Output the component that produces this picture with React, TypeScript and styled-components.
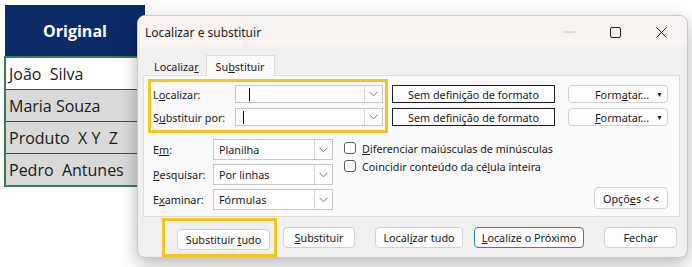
import styled, { createGlobalStyle } from "styled-components";
import { ReactNode } from "react";

const GlobalStyle = createGlobalStyle`
    html, body {
        margin: 0;
        padding: 0;
        background: #ffffff;
    }
    body {
        width: 692px;
        height: 267px;
        overflow: hidden;
        font-family: "Noto Sans", "Open Sans", sans-serif;
    }
`;

const Page = styled.div`
    position: relative;
    width: 692px;
    height: 267px;
    padding: 5px 0 0 5px;
    box-sizing: border-box;
`;

// ---------- spreadsheet behind the dialog ----------

const Sheet = styled.div`
    width: 140px;
    display: flex;
    flex-direction: column;
`;

const HeaderCell = styled.div`
    height: 51px;
    background: #0b2a66;
    color: #ffffff;
    font-family: "Open Sans", "Noto Sans", sans-serif;
    font-weight: 700;
    font-size: 16px;
    display: flex;
    align-items: center;
    justify-content: center;
`;

const Rows = styled.div`
    border: 2px solid #3d7a57;
    margin-left: -1px;
    width: 136px;
`;

const Row = styled.div<{ $shaded?: boolean }>`
    height: 31px;
    display: flex;
    align-items: center;
    padding-left: 3px;
    background: ${(p) => (p.$shaded ? "#d9d9d9" : "#ffffff")};
    border-top: ${(p) => (p.$shaded ? "1px solid #4a4a4a" : "none")};
    font-family: "Open Sans", "Noto Sans", sans-serif;
    font-size: 16px;
    color: #1a1a1a;
    white-space: pre;
`;

// ---------- dialog window ----------

const Dialog = styled.div`
    position: absolute;
    left: 137px;
    top: 15px;
    width: 551px;
    height: 243px;
    border-radius: 8px;
    border: 1px solid #c9c9c9;
    box-sizing: border-box;
    background: #f0f0f0;
    box-shadow: 0 6px 18px rgba(0, 0, 0, 0.28);
    overflow: hidden;
    font-size: 10.8px;
    color: #1b1b1b;
    display: flex;
    flex-direction: column;
`;

const TitleBar = styled.div`
    height: 30px;
    flex-shrink: 0;
    background: #f9f3f1;
    display: flex;
    align-items: center;
    padding: 1px 3px 0 7px;
`;

const Title = styled.div`
    flex: 1;
    font-size: 12px;
    color: #222;
`;

const WinButton = styled.div`
    width: 46px;
    height: 30px;
    display: flex;
    align-items: center;
    justify-content: center;
`;

const Tabs = styled.div`
    display: flex;
    align-items: flex-end;
    height: 21px;
    margin-top: 7px;
    padding-left: 9px;
    position: relative;
    z-index: 1;
`;

const Tab = styled.div<{ $active?: boolean }>`
    height: ${(p) => (p.$active ? "21px" : "19px")};
    padding: 0 ${(p) => (p.$active ? "9px" : "6px")};
    display: flex;
    align-items: center;
    box-sizing: border-box;
    background: ${(p) => (p.$active ? "#fafafa" : "transparent")};
    border: ${(p) => (p.$active ? "1px solid #dcdcdc" : "1px solid transparent")};
    border-bottom: none;
    margin-bottom: ${(p) => (p.$active ? "-1px" : "0")};
`;

const Panel = styled.div`
    margin: 0 7px 0 5px;
    height: 142px;
    box-sizing: border-box;
    background: #fafafa;
    border: 1px solid #dcdcdc;
    padding: 3px 0 0 4px;
    display: flex;
    flex-direction: column;
`;

const TopSection = styled.div`
    display: flex;
    align-items: flex-start;
`;

const Highlight = styled.div`
    border: 3px solid #f5c524;
    box-sizing: border-box;
`;

const FindBox = styled(Highlight)`
    width: 240px;
    height: 54px;
    padding: 3px 0 0 2px;
    display: flex;
    flex-direction: column;
    gap: 5px;
`;

const FieldRow = styled.div`
    display: flex;
    align-items: center;
    height: 18px;
`;

const Label = styled.div<{ $w: number }>`
    width: ${(p) => p.$w}px;
    flex-shrink: 0;
    white-space: nowrap;
`;

const Combo = styled.div<{ $w: number; $h: number }>`
    width: ${(p) => p.$w}px;
    height: ${(p) => p.$h}px;
    box-sizing: border-box;
    background: #ffffff;
    border: 1px solid #c8c8c8;
    display: flex;
    align-items: center;
`;

const ComboText = styled.div`
    flex: 1;
    padding-left: 5px;
    display: flex;
    align-items: center;
    white-space: nowrap;
`;

const Caret = styled.span<{ $indent: number }>`
    display: inline-block;
    width: 1px;
    height: 13px;
    background: #111;
    margin-left: ${(p) => p.$indent}px;
`;

const Arrow = styled.div`
    width: 17px;
    align-self: stretch;
    border-left: 1px solid #d6d6d6;
    display: flex;
    align-items: center;
    justify-content: center;
`;

const Column = styled.div<{ $ml: number; $mt: number }>`
    display: flex;
    flex-direction: column;
    gap: 5px;
    margin-left: ${(p) => p.$ml}px;
    margin-top: ${(p) => p.$mt}px;
`;

const FormatBox = styled.div`
    width: 163px;
    height: 18px;
    box-sizing: border-box;
    background: #ffffff;
    border: 1px solid #1f1f1f;
    display: flex;
    align-items: center;
    justify-content: center;
`;

const Button = styled.div<{ $w: number; $h?: number; $primary?: boolean }>`
    width: ${(p) => p.$w}px;
    height: ${(p) => p.$h ?? 21}px;
    box-sizing: border-box;
    background: #fdfdfd;
    border: 1px solid ${(p) => (p.$primary ? "#2f7fd0" : "#d2d2d2")};
    border-radius: 4px;
    display: flex;
    align-items: center;
    justify-content: center;
    white-space: pre;
    flex-shrink: 0;
`;

const DropButton = styled(Button)`
    justify-content: flex-start;
    padding-left: 26px;
`;

const DropMark = styled.span`
    margin-left: auto;
    margin-right: 4px;
    font-size: 7px;
`;

const LowerSection = styled.div`
    display: flex;
    margin-top: 6px;
    padding-left: 5px;
    flex: 1;
`;

const OptionGrid = styled.div`
    display: grid;
    grid-template-columns: 60px 120px;
    grid-auto-rows: 21px;
    row-gap: 4px;
    align-items: center;
`;

const Checks = styled.div`
    display: flex;
    flex-direction: column;
    gap: 4px;
    margin-left: 11px;
    padding-top: 2px;
`;

const CheckRow = styled.div`
    display: flex;
    align-items: center;
    gap: 6px;
    height: 14px;
`;

const Box = styled.span`
    width: 12px;
    height: 12px;
    box-sizing: border-box;
    border: 1px solid #5a5a5a;
    border-radius: 3px;
    background: #fdfdfd;
`;

const OptionsSlot = styled.div`
    margin-left: auto;
    margin-right: 11px;
    align-self: flex-start;
    margin-top: 48px;
`;

const BottomBar = styled.div`
    display: flex;
    align-items: center;
    padding-left: 24px;
    margin-top: 1px;
`;

const ButtonBox = styled(Highlight)`
    width: 115px;
    height: 39px;
    padding: 8px 0 0 12px;
`;

const Gap = styled.div<{ $w: number }>`
    width: ${(p) => p.$w}px;
    flex-shrink: 0;
`;

const Chevron = () => (
    <svg width="9" height="6" viewBox="0 0 9 6">
        <path d="M0.5 0.8 L4.5 4.8 L8.5 0.8" fill="none" stroke="#7a7a7a" strokeWidth="1" />
    </svg>
);

const ComboField = ({ w, h, children }: { w: number; h: number; children?: ReactNode }) => (
    <Combo $w={w} $h={h}>
        <ComboText>{children}</ComboText>
        <Arrow>
            <Chevron />
        </Arrow>
    </Combo>
);

export default function App() {
    return (
        <>
            <GlobalStyle />
            <Page>
                <Sheet>
                    <HeaderCell>Original</HeaderCell>
                    <Rows>
                        <Row>João  Silva</Row>
                        <Row $shaded>Maria Souza</Row>
                        <Row $shaded>Produto  X Y  Z</Row>
                        <Row $shaded>Pedro  Antunes</Row>
                    </Rows>
                </Sheet>

                <Dialog>
                    <TitleBar>
                        <Title>Localizar e substituir</Title>
                        <WinButton>
                            <svg width="12" height="2" viewBox="0 0 12 2">
                                <path d="M0 1 H12" stroke="#c4c4c4" strokeWidth="1" />
                            </svg>
                        </WinButton>
                        <WinButton>
                            <svg width="11" height="11" viewBox="0 0 11 11">
                                <rect x="0.5" y="0.5" width="10" height="10" rx="1.5" fill="none" stroke="#222" strokeWidth="1" />
                            </svg>
                        </WinButton>
                        <WinButton>
                            <svg width="11" height="11" viewBox="0 0 11 11">
                                <path d="M0.5 0.5 L10.5 10.5 M10.5 0.5 L0.5 10.5" stroke="#222" strokeWidth="1" />
                            </svg>
                        </WinButton>
                    </TitleBar>

                    <Tabs>
                        <Tab><span>Localiza<u>r</u></span></Tab>
                        <Tab $active><span>Su<u>b</u>stituir</span></Tab>
                    </Tabs>

                    <Panel>
                        <TopSection>
                            <FindBox>
                                <FieldRow>
                                    <Label $w={82}>L<u>o</u>calizar:</Label>
                                    <ComboField w={148} h={18}>
                                        <Caret $indent={8} />
                                    </ComboField>
                                </FieldRow>
                                <FieldRow>
                                    <Label $w={82}>S<u>u</u>bstituir por:</Label>
                                    <ComboField w={148} h={18}>
                                        <Caret $indent={2} />
                                    </ComboField>
                                </FieldRow>
                            </FindBox>
                            <Column $ml={4} $mt={6}>
                                <FormatBox>Sem definição de formato</FormatBox>
                                <FormatBox>Sem definição de formato</FormatBox>
                            </Column>
                            <Column $ml={13} $mt={6}>
                                <DropButton $w={100} $h={18}>
                                    <span>Form<u>a</u>tar...</span>
                                    <DropMark>▼</DropMark>
                                </DropButton>
                                <DropButton $w={100} $h={18}>
                                    <span><u>F</u>ormatar...</span>
                                    <DropMark>▼</DropMark>
                                </DropButton>
                            </Column>
                        </TopSection>

                        <LowerSection>
                            <OptionGrid>
                                <Label $w={60}>E<u>m</u>:</Label>
                                <ComboField w={120} h={21}>Planilha</ComboField>
                                <Label $w={60}><u>P</u>esquisar:</Label>
                                <ComboField w={120} h={21}>Por linhas</ComboField>
                                <Label $w={60}>E<u>x</u>aminar:</Label>
                                <ComboField w={120} h={21}>Fórmulas</ComboField>
                            </OptionGrid>
                            <Checks>
                                <CheckRow>
                                    <Box />
                                    <span><u>D</u>iferenciar maiúsculas de minúsculas</span>
                                </CheckRow>
                                <CheckRow>
                                    <Box />
                                    <span>Coincidir conteúdo da cé<u>l</u>ula inteira</span>
                                </CheckRow>
                            </Checks>
                            <OptionsSlot>
                                <Button $w={74} $h={22}><span>Opçõ<u>e</u>s &lt; &lt;</span></Button>
                            </OptionsSlot>
                        </LowerSection>
                    </Panel>

                    <BottomBar>
                        <ButtonBox>
                            <Button $w={93}><span>Substituir <u>t</u>udo</span></Button>
                        </ButtonBox>
                        <Gap $w={6} />
                        <Button $w={72}><span><u>S</u>ubstituir</span></Button>
                        <Gap $w={20} />
                        <Button $w={88}><span>Local<u>i</u>zar tudo</span></Button>
                        <Gap $w={11} />
                        <Button $w={110} $primary><span><u>L</u>ocalize o Próximo</span></Button>
                        <Gap $w={20} />
                        <Button $w={73}>Fechar</Button>
                    </BottomBar>
                </Dialog>
            </Page>
        </>
    );
}
